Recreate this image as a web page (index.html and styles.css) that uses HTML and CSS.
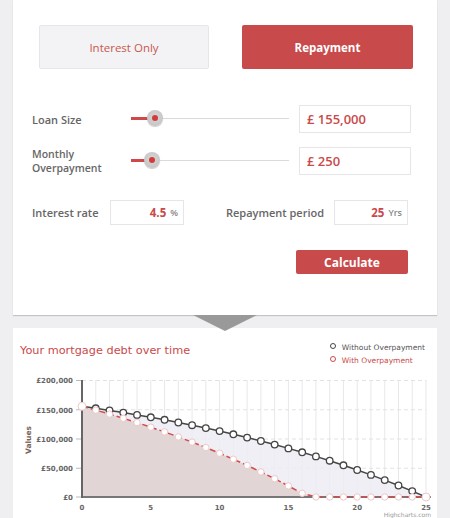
FILE: index.html
```html
<!DOCTYPE html>
<html>
<head>
<meta charset="utf-8">
<link rel="stylesheet" href="styles.css">
</head>
<body>
<div class="panel">
  <div class="tabs">
    <div class="tab tab-off">Interest Only</div>
    <div class="tab tab-on">Repayment</div>
  </div>
  <div class="srow srow-first">
    <div class="label">Loan Size</div>
    <div class="slider"><div class="fill fill-loan"></div><div class="thumb thumb-loan"></div></div>
    <div class="input big">£ 155,000</div>
  </div>
  <div class="srow">
    <div class="label label-two">Monthly<br>Overpayment</div>
    <div class="slider"><div class="fill fill-over"></div><div class="thumb thumb-over"></div></div>
    <div class="input big">£ 250</div>
  </div>
  <div class="irow">
    <div class="label lab-rate">Interest rate</div>
    <div class="input small"><span class="num">4.5</span><span class="unit">%</span></div>
    <div class="label lab-period">Repayment period</div>
    <div class="input small"><span class="num">25</span><span class="unit">Yrs</span></div>
  </div>
  <div class="actions"><div class="calc">Calculate</div></div>
</div>
<div class="arrow"></div>
<div class="chartcard">
  <div class="chead">
    <div class="ctitle">Your mortgage debt over time</div>
    <div class="legend">
      <div class="litem"><span class="ldot ldot-dark"></span>Without Overpayment</div>
      <div class="litem litem-red"><span class="ldot ldot-red"></span>With Overpayment</div>
    </div>
  </div>
  <svg class="chart" width="424" height="146" viewBox="0 0 424 146">
    <g class="vgrid" stroke="#e8e8ec" stroke-width="1">
      <line x1="82.76" y1="8" x2="82.76" y2="125"/><line x1="96.52" y1="8" x2="96.52" y2="125"/><line x1="110.28" y1="8" x2="110.28" y2="125"/><line x1="124.04" y1="8" x2="124.04" y2="125"/><line x1="137.8" y1="8" x2="137.8" y2="125"/><line x1="151.56" y1="8" x2="151.56" y2="125"/><line x1="165.32" y1="8" x2="165.32" y2="125"/><line x1="179.08" y1="8" x2="179.08" y2="125"/><line x1="192.84" y1="8" x2="192.84" y2="125"/><line x1="206.6" y1="8" x2="206.6" y2="125"/><line x1="220.36" y1="8" x2="220.36" y2="125"/><line x1="234.12" y1="8" x2="234.12" y2="125"/><line x1="247.88" y1="8" x2="247.88" y2="125"/><line x1="261.64" y1="8" x2="261.64" y2="125"/><line x1="275.4" y1="8" x2="275.4" y2="125"/><line x1="289.16" y1="8" x2="289.16" y2="125"/><line x1="302.92" y1="8" x2="302.92" y2="125"/><line x1="316.68" y1="8" x2="316.68" y2="125"/><line x1="330.44" y1="8" x2="330.44" y2="125"/><line x1="344.2" y1="8" x2="344.2" y2="125"/><line x1="357.96" y1="8" x2="357.96" y2="125"/><line x1="371.72" y1="8" x2="371.72" y2="125"/><line x1="385.48" y1="8" x2="385.48" y2="125"/><line x1="399.24" y1="8" x2="399.24" y2="125"/><line x1="413" y1="8" x2="413" y2="125"/>
    </g>
    <g stroke="#e2e2e6" stroke-width="1" stroke-dasharray="4,3">
      <line x1="69" y1="8.5" x2="413" y2="8.5"/>
      <line x1="69" y1="37.75" x2="413" y2="37.75"/>
      <line x1="69" y1="67" x2="413" y2="67"/>
      <line x1="69" y1="96.25" x2="413" y2="96.25"/>
    </g>
    <g stroke="#bbb" stroke-width="1">
      <line x1="63" y1="8.5" x2="69" y2="8.5"/>
      <line x1="63" y1="37.75" x2="69" y2="37.75"/>
      <line x1="63" y1="67" x2="69" y2="67"/>
      <line x1="63" y1="96.25" x2="69" y2="96.25"/>
      <line x1="63" y1="125" x2="69" y2="125"/>
    </g>
    <polygon fill="#ececf3" fill-opacity="0.85" points="69,125 69,34.3 82.76,36.3 96.52,38.4 110.28,40.6 124.04,42.9 137.8,45.3 151.56,47.8 165.32,50.5 179.08,53.2 192.84,56.1 206.6,59.1 220.36,62.3 234.12,65.6 247.88,69 261.64,72.6 275.4,76.4 289.16,80.3 302.92,84.4 316.68,88.7 330.44,93.3 344.2,98 357.96,102.9 371.72,108.1 385.48,113.5 399.24,119.1 413,125"/>
    <polygon fill="#e2d5d5" points="69,125 69,34.3 82.76,38.1 96.52,42.1 110.28,46.3 124.04,50.6 137.8,55.2 151.56,59.9 165.32,64.9 179.08,70.1 192.84,75.5 206.6,81.2 220.36,87.2 234.12,93.4 247.88,99.9 261.64,106.7 275.4,113.9 289.16,121.3 302.92,125"/>
    <polyline fill="none" stroke="#454545" stroke-width="1.5" points="69,34.3 82.76,36.3 96.52,38.4 110.28,40.6 124.04,42.9 137.8,45.3 151.56,47.8 165.32,50.5 179.08,53.2 192.84,56.1 206.6,59.1 220.36,62.3 234.12,65.6 247.88,69 261.64,72.6 275.4,76.4 289.16,80.3 302.92,84.4 316.68,88.7 330.44,93.3 344.2,98 357.96,102.9 371.72,108.1 385.48,113.5 399.24,119.1 413,125"/>
    <line x1="69" y1="125" x2="418" y2="125" stroke="#777" stroke-width="2"/>
    <line x1="69" y1="8" x2="69" y2="126" stroke="#666" stroke-width="2"/>
    <polyline fill="none" stroke="#d24c4c" stroke-width="1.5" stroke-dasharray="6,3" points="69,34.3 82.76,38.1 96.52,42.1 110.28,46.3 124.04,50.6 137.8,55.2 151.56,59.9 165.32,64.9 179.08,70.1 192.84,75.5 206.6,81.2 220.36,87.2 234.12,93.4 247.88,99.9 261.64,106.7 275.4,113.9 289.16,121.3 302.92,125 413,125"/>
    <g fill="#fff" stroke="#454545" stroke-width="1.3">
      <circle cx="82.76" cy="36.3" r="3.3"/><circle cx="96.52" cy="38.4" r="3.3"/><circle cx="110.28" cy="40.6" r="3.3"/><circle cx="124.04" cy="42.9" r="3.3"/><circle cx="137.8" cy="45.3" r="3.3"/><circle cx="151.56" cy="47.8" r="3.3"/><circle cx="165.32" cy="50.5" r="3.3"/><circle cx="179.08" cy="53.2" r="3.3"/><circle cx="192.84" cy="56.1" r="3.3"/><circle cx="206.6" cy="59.1" r="3.3"/><circle cx="220.36" cy="62.3" r="3.3"/><circle cx="234.12" cy="65.6" r="3.3"/><circle cx="247.88" cy="69" r="3.3"/><circle cx="261.64" cy="72.6" r="3.3"/><circle cx="275.4" cy="76.4" r="3.3"/><circle cx="289.16" cy="80.3" r="3.3"/><circle cx="302.92" cy="84.4" r="3.3"/><circle cx="316.68" cy="88.7" r="3.3"/><circle cx="330.44" cy="93.3" r="3.3"/><circle cx="344.2" cy="98" r="3.3"/><circle cx="357.96" cy="102.9" r="3.3"/><circle cx="371.72" cy="108.1" r="3.3"/><circle cx="385.48" cy="113.5" r="3.3"/><circle cx="399.24" cy="119.1" r="3.3"/>
    </g>
    <g fill="#fff" stroke="#ecc8c8" stroke-width="1">
      <circle cx="82.76" cy="38.1" r="3.2"/><circle cx="96.52" cy="42.1" r="3.2"/><circle cx="110.28" cy="46.3" r="3.2"/><circle cx="124.04" cy="50.6" r="3.2"/><circle cx="137.8" cy="55.2" r="3.2"/><circle cx="151.56" cy="59.9" r="3.2"/><circle cx="165.32" cy="64.9" r="3.2"/><circle cx="179.08" cy="70.1" r="3.2"/><circle cx="192.84" cy="75.5" r="3.2"/><circle cx="206.6" cy="81.2" r="3.2"/><circle cx="220.36" cy="87.2" r="3.2"/><circle cx="234.12" cy="93.4" r="3.2"/><circle cx="247.88" cy="99.9" r="3.2"/><circle cx="261.64" cy="106.7" r="3.2"/><circle cx="275.4" cy="113.9" r="3.2"/><circle cx="289.16" cy="121.3" r="3.2"/><circle cx="302.92" cy="125" r="3.2"/><circle cx="316.68" cy="125" r="3.2"/><circle cx="330.44" cy="125" r="3.2"/><circle cx="344.2" cy="125" r="3.2"/><circle cx="357.96" cy="125" r="3.2"/><circle cx="371.72" cy="125" r="3.2"/><circle cx="385.48" cy="125" r="3.2"/><circle cx="399.24" cy="125" r="3.2"/>
      <circle cx="69" cy="34.3" r="4"/><circle cx="413" cy="125" r="4"/>
    </g>
    <g class="ylab" text-anchor="end">
      <text x="60" y="11">£200,000</text>
      <text x="60" y="40.5">£150,000</text>
      <text x="60" y="70">£100,000</text>
      <text x="60" y="99">£50,000</text>
      <text x="60" y="128">£0</text>
    </g>
    <g class="xlab" text-anchor="middle">
      <text x="69" y="138">0</text>
      <text x="137.8" y="138">5</text>
      <text x="206.6" y="138">10</text>
      <text x="275.4" y="138">15</text>
      <text x="344.2" y="138">20</text>
      <text x="413" y="138">25</text>
    </g>
    <text class="ytitle" x="0" y="0" transform="translate(18,68) rotate(-90)" text-anchor="middle">Values</text>
    <text class="credits" x="418" y="145" text-anchor="end">Highcharts.com</text>
  </svg>
</div>
</body>
</html>
```
FILE: styles.css
```css
html, body { margin: 0; padding: 0; }
body {
  background: #efeff2;
  font-family: "Open Sans", "Liberation Sans", sans-serif;
  width: 450px;
  height: 518px;
  overflow: hidden;
}
.panel {
  margin: 0 13px;
  height: 315px;
  box-sizing: border-box;
  background: #fff;
  padding: 25px 0 0 19px;
  box-shadow: 0 1px 1px rgba(0,0,0,0.18);
}
.tabs {
  display: grid;
  grid-template-columns: 170px 171px;
  column-gap: 33px;
  margin-left: 7px;
  height: 44px;
}
.tab {
  display: flex;
  align-items: center;
  justify-content: center;
  border-radius: 2px;
  font-size: 11.5px;
}
.tab-off {
  background: #f3f3f5;
  border: 1px solid #e6e6ea;
  color: #c8574f;
}
.tab-on {
  background: #c84a4a;
  color: #fff;
  font-weight: 700;
  font-size: 11.5px;
}
.srow {
  display: grid;
  grid-template-columns: 99px 158px 122px;
  column-gap: 0;
  align-items: center;
  height: 28px;
  margin-top: 14px;
}
.srow .input { margin-left: 10px; }
.srow-first { margin-top: 36px; }
.label {
  font-size: 11px;
  font-weight: 600;
  color: #666;
  line-height: 13px;
}
.label-two { line-height: 14px; font-size: 10.5px; }
.slider {
  position: relative;
  height: 28px;
}
.slider::before {
  content: "";
  display: block;
  position: absolute;
  left: 0; right: 0; top: 13px;
  height: 1px;
  background: #dcd8dc;
}
.fill {
  position: absolute;
  left: 0;
  top: 12px;
  height: 3px;
  background: #d04848;
}
.fill-loan { width: 24px; }
.fill-over { width: 21px; }
.thumb {
  position: absolute;
  top: 5px;
  width: 16px;
  height: 16px;
  margin-left: -8px;
  border-radius: 50%;
  background: radial-gradient(circle at 50% 45%, #d8d8d8 0, #c9c9c9 60%, #b5b5b5 100%);
  box-shadow: 0 1px 1px rgba(0,0,0,0.2);
}
.thumb::after {
  content: "";
  position: absolute;
  left: 5px; top: 5px;
  width: 6px; height: 6px;
  border-radius: 50%;
  background: #d33b3b;
}
.thumb-loan { left: 24px; }
.thumb-over { left: 21px; }
.input {
  box-sizing: border-box;
  border: 1px solid #e6e6e8;
  background: #fff;
  color: #c94a4a;
  font-weight: 600;
}
.big {
  height: 28px;
  display: flex;
  align-items: center;
  padding-left: 7px;
  font-size: 13px;
}
.irow {
  display: flex;
  align-items: center;
  margin-top: 25px;
  height: 25px;
}
.lab-rate { width: 78px; }
.lab-period { width: 108px; margin-left: 42px; }
.small {
  width: 74px;
  height: 25px;
  display: flex;
  align-items: center;
  justify-content: flex-end;
  padding-right: 5px;
  font-size: 11.5px;
  font-weight: 700;
}
.unit {
  color: #888;
  font-size: 9px;
  margin-left: 4px;
  font-weight: 600;
}
.actions {
  display: flex;
  justify-content: flex-end;
  margin-top: 25px;
  padding-right: 29px;
}
.calc {
  width: 112px;
  height: 24px;
  border-radius: 2px;
  background: #c84a4a;
  color: #fff;
  font-weight: 700;
  font-size: 12px;
  display: flex;
  align-items: center;
  justify-content: center;
}
.arrow {
  position: relative;
  z-index: 2;
  width: 0; height: 0;
  margin: 0 auto -16px 193px;
  border-left: 32.5px solid transparent;
  border-right: 32.5px solid transparent;
  border-top: 16px solid #999;
}
.chartcard {
  margin: 13px 13px 0;
  background: #fff;
  height: 200px;
}
.chead {
  display: flex;
  justify-content: space-between;
  height: 44px;
  box-sizing: border-box;
  padding: 14px 12px 0 7px;
}
.ctitle {
  font-family: "DejaVu Sans", sans-serif;
  font-size: 11.3px;
  color: #c94a4a;
  margin-top: 2px;
}
.legend {
  font-family: "DejaVu Sans", sans-serif;
  font-size: 7.5px;
  color: #555;
  margin-top: -1px;
}
.litem {
  display: flex;
  align-items: center;
  height: 13px;
}
.litem-red { color: #c94a4a; }
.ldot {
  width: 4px; height: 4px;
  border-radius: 50%;
  border: 1.5px solid #444;
  margin-right: 6px;
  margin-top: -3px;
}
.ldot-red { border-color: #d04848; }
.chart { display: block; }
.ylab text, .xlab text {
  font-family: "DejaVu Sans", sans-serif;
  font-size: 7px;
  font-weight: 700;
  fill: #666;
}
.ytitle {
  font-family: "DejaVu Sans", sans-serif;
  font-size: 7.5px;
  font-weight: 700;
  fill: #7b6257;
}
.credits {
  font-family: "DejaVu Sans", sans-serif;
  font-size: 6px;
  fill: #999;
}
```
